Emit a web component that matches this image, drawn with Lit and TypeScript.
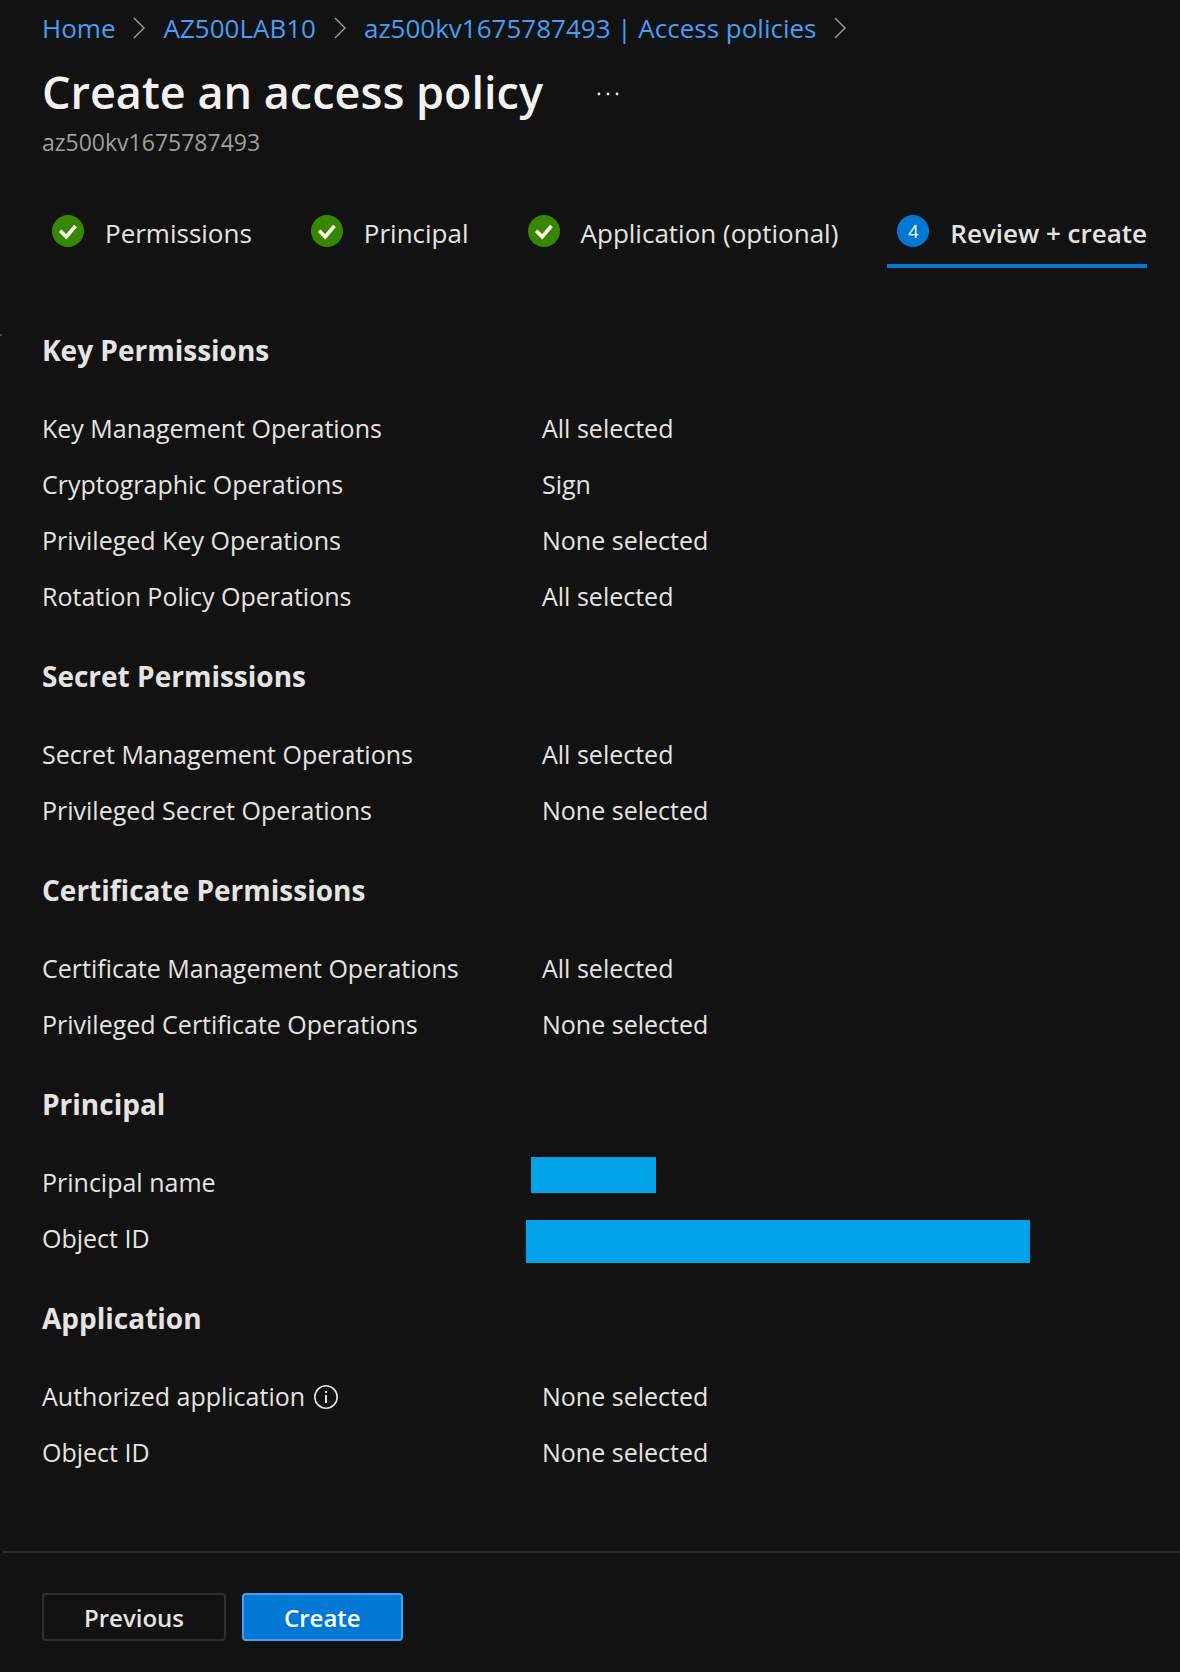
import { LitElement, html, css, nothing } from "lit";
import { customElement, property } from "lit/decorators.js";

type Mask = "short" | "long";

interface Row {
  label: string;
  value?: string;
  info?: boolean;
  mask?: Mask;
}

interface Section {
  title: string;
  rows: Row[];
}

const CRUMBS = ["Home", "AZ500LAB10", "az500kv1675787493 | Access policies"];

const STEPS = [
  { label: "Permissions", done: true },
  { label: "Principal", done: true },
  { label: "Application (optional)", done: true },
  { label: "Review + create", done: false },
];

const SECTIONS: Section[] = [
  {
    title: "Key Permissions",
    rows: [
      { label: "Key Management Operations", value: "All selected" },
      { label: "Cryptographic Operations", value: "Sign" },
      { label: "Privileged Key Operations", value: "None selected" },
      { label: "Rotation Policy Operations", value: "All selected" },
    ],
  },
  {
    title: "Secret Permissions",
    rows: [
      { label: "Secret Management Operations", value: "All selected" },
      { label: "Privileged Secret Operations", value: "None selected" },
    ],
  },
  {
    title: "Certificate Permissions",
    rows: [
      { label: "Certificate Management Operations", value: "All selected" },
      { label: "Privileged Certificate Operations", value: "None selected" },
    ],
  },
  {
    title: "Principal",
    rows: [
      { label: "Principal name", mask: "short" },
      { label: "Object ID", mask: "long" },
    ],
  },
  {
    title: "Application",
    rows: [
      { label: "Authorized application", value: "None selected", info: true },
      { label: "Object ID", value: "None selected" },
    ],
  },
];

@customElement("wizard-steps")
class WizardSteps extends LitElement {
  static styles = css`
    :host {
      display: block;
    }
    .steps {
      display: flex;
      flex-wrap: wrap;
      gap: 0 49px;
    }
    .step {
      display: flex;
      align-items: center;
      gap: 21px;
      height: 62px;
      padding: 0 0 4px 10px;
      border: 0;
      border-bottom: 4px solid transparent;
      background: none;
      color: #e6e4e2;
      font: 400 26px/32px var(--ui-font);
      white-space: nowrap;
      box-sizing: border-box;
      cursor: pointer;
    }
    .current {
      border-bottom-color: #0078d4;
      font-weight: 600;
    }
    .badge {
      display: grid;
      place-items: center;
      width: 32px;
      height: 32px;
      border-radius: 50%;
      margin-bottom: 4px;
      background: #0078d4;
      color: #fff;
      font: 400 18px/32px var(--ui-font);
    }
    .done {
      background: #398700;
    }
    .tick {
      display: block;
      width: 32px;
      height: 32px;
    }
  `;

  render() {
    return html`<nav class="steps" aria-label="Steps">
      ${STEPS.map(
        (s, i) => html`<button
          type="button"
          class="step ${s.done ? "" : "current"}"
          aria-current=${s.done ? nothing : "step"}
        >
          <span class="badge ${s.done ? "done" : ""}"
            >${s.done
              ? html`<svg class="tick" viewBox="0 0 32 32" aria-hidden="true">
                  <path
                    d="M8.200 15.800l6 6L23.400 11"
                    fill="none"
                    stroke="#fff"
                    stroke-width="3.600"
                  />
                </svg>`
              : i + 1}</span
          ><span>${s.label}</span>
        </button>`,
      )}
    </nav>`;
  }
}

@customElement("review-section")
class ReviewSection extends LitElement {
  @property({ attribute: false }) section!: Section;

  static styles = css`
    :host {
      display: block;
    }
    .title {
      margin: 0;
      padding: 16px 0 30px;
      font: 700 28px/40px var(--ui-font);
    }
    .rows {
      margin: 0;
      padding-bottom: 16px;
    }
    .row {
      display: grid;
      grid-template-columns: 500px minmax(0, 1fr);
      align-items: center;
      min-height: 56px;
      font: 400 25px/36px var(--ui-font);
    }
    .label {
      display: flex;
      align-items: center;
      gap: 8px;
    }
    .value {
      margin: 0;
      position: relative;
    }
    .info {
      display: flex;
      padding: 0;
      border: 0;
      background: none;
      color: inherit;
    }
    .mask {
      position: absolute;
      background: #00a2e8;
    }
    .short {
      left: -11px;
      top: -25px;
      width: 125px;
      height: 36px;
    }
    .long {
      left: -16px;
      top: -18px;
      width: 504px;
      height: 43px;
    }
  `;

  render() {
    return html`<h2 class="title">${this.section.title}</h2>
      <dl class="rows">
        ${this.section.rows.map(
          (r) => html`<div class="row">
            <dt class="label">
              <span>${r.label}</span>${r.info
                ? html`<button class="info" type="button" aria-label="More information">
                    <svg width="26" height="26" viewBox="0 0 26 26" aria-hidden="true">
                      <circle cx="13" cy="14" r="11.200" fill="none" stroke="currentColor" stroke-width="1.600" />
                      <path d="M12 8h2v2h-2zM12 12h2v8h-2z" fill="currentColor" />
                    </svg>
                  </button>`
                : nothing}
            </dt>
            <dd class="value">
              ${r.mask ? html`<span class="mask ${r.mask}"></span>` : r.value}
            </dd>
          </div>`,
        )}
      </dl>`;
  }
}

@customElement("app-root")
class AppRoot extends LitElement {
  static styles = css`
    :host {
      --ui-font: "Segoe UI", "Open Sans", "Noto Sans", sans-serif;
      display: flex;
      flex-direction: column;
      min-height: 100vh;
      box-sizing: border-box;
      background: #121212;
      color: #e6e4e2;
      font-family: var(--ui-font);
    }
    .head {
      padding: 9px 28px 0 42px;
    }
    .crumbs {
      display: flex;
      align-items: center;
      flex-wrap: wrap;
      gap: 17px;
      font-size: 26px;
      line-height: 38px;
    }
    .crumb {
      color: #479ef5;
      text-decoration: none;
    }
    .chevron {
      display: block;
    }
    .heading {
      display: flex;
      align-items: center;
      gap: 52px;
      padding-top: 12px;
    }
    .title {
      margin: 0;
      color: #f3f2f1;
      font-size: 45px;
      font-weight: 600;
      line-height: 66px;
    }
    .more {
      display: flex;
      padding: 4px 0 0;
      border: 0;
      background: none;
      color: #e6e4e2;
    }
    .subtitle {
      margin: 0;
      color: #a19f9d;
      font-size: 23px;
      line-height: 34px;
    }
    .tabs {
      display: block;
      padding-top: 47px;
    }
    .body {
      position: relative;
      flex: 1;
      padding: 46px 28px 38px 42px;
    }
    .body::before {
      content: "";
      position: absolute;
      left: 0;
      top: 66px;
      width: 2px;
      height: 2px;
      background: #4a4a4a;
    }
    .foot {
      display: flex;
      gap: 16px;
      margin-left: 2px;
      padding: 40px 40px 31px;
      border-top: 2px solid #2b2b2b;
    }
    .btn {
      height: 48px;
      padding: 2px 40px 0;
      border: 2px solid #2f2f2f;
      border-radius: 4px;
      background: none;
      color: #e6e4e2;
      font: 600 24px/42px var(--ui-font);
      cursor: pointer;
    }
    .primary {
      border-color: #479ef5;
      background: #0078d4;
      color: #fff;
    }
  `;

  render() {
    return html`
      <header class="head">
        <nav class="crumbs" aria-label="Breadcrumb">
          ${CRUMBS.map(
            (c) => html`<a class="crumb" href="#">${c}</a>
              <svg class="chevron" width="14" height="22" viewBox="0 0 14 22" aria-hidden="true">
                <path d="M2 1l10 10L2 21" fill="none" stroke="#a19f9d" stroke-width="1.400" />
              </svg>`,
          )}
        </nav>
        <div class="heading">
          <h1 class="title">Create an access policy</h1>
          <button class="more" type="button" aria-label="More actions">
            <svg width="26" height="8" viewBox="0 0 26 8" aria-hidden="true">
              <g fill="currentColor">
                <circle cx="4" cy="4" r="1.400" />
                <circle cx="13" cy="4" r="1.400" />
                <circle cx="22" cy="4" r="1.400" />
              </g>
            </svg>
          </button>
        </div>
        <p class="subtitle">az500kv1675787493</p>
        <wizard-steps class="tabs"></wizard-steps>
      </header>
      <main class="body">
        ${SECTIONS.map((s) => html`<review-section .section=${s}></review-section>`)}
      </main>
      <footer class="foot">
        <button class="btn" type="button">Previous</button>
        <button class="btn primary" type="button">Create</button>
      </footer>
    `;
  }
}
